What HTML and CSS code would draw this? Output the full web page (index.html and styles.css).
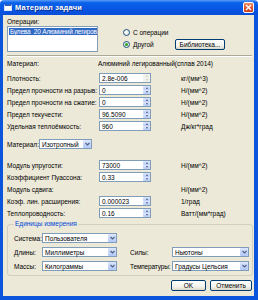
FILE: index.html
```html
<!DOCTYPE html>
<html lang="ru">
  <head>
    <meta charset="UTF-8" />
    <meta name="viewport" content="width=device-width, initial-scale=1.0" />
    <title>Материал задачи</title>
    <link rel="stylesheet" href="styles.css">
  </head>
  <body>
    <div class="window">
      <div class="titlebar">
        <span class="app-icon"></span>
        <span class="title">Материал задачи</span>
        <span class="close">
          <svg width="7" height="7" viewBox="0 0 7 7"><path d="M1 1L6 6M6 1L1 6" stroke="#fff" stroke-width="1.4" /></svg>
        </span>
      </div>
      <div class="frame">
        <div class="caption">Операции:</div>
        <div class="ops">
          <div class="listbox">
            <div class="item selected">Булева_20 Алюминий легиров</div>
          </div>
          <div class="source">
            <label class="radio"><span class="dot"></span>С операции</label>
            <div class="source-row">
              <label class="radio checked"><span class="dot"></span>Другой</label>
              <button class="btn lib">Библиотека...</button>
            </div>
          </div>
        </div>
        <div class="sep"></div>

        <div class="material-row">
          <span class="mat-label">Материал:</span>
          <span>Алюминий легированный(сплав 2014)</span>
        </div>

        <div class="props">
          <span>Плотность:</span>
          <div class="field"><span>2.8e-006</span><span class="spin disabled"><i class="up"></i><i class="down"></i></span></div>
          <span class="unit">кг/(мм^3)</span>

          <span>Предел прочности на разрыв:</span>
          <div class="field"><span>0</span><span class="spin"><i class="up"></i><i class="down"></i></span></div>
          <span class="unit">Н/(мм^2)</span>

          <span>Предел прочности на сжатие:</span>
          <div class="field"><span>0</span><span class="spin"><i class="up"></i><i class="down"></i></span></div>
          <span class="unit">Н/(мм^2)</span>

          <span>Предел текучести:</span>
          <div class="field"><span>96.5090</span><span class="spin"><i class="up"></i><i class="down"></i></span></div>
          <span class="unit">Н/(мм^2)</span>

          <span>Удельная теплоёмкость:</span>
          <div class="field"><span>960</span><span class="spin"><i class="up"></i><i class="down"></i></span></div>
          <span class="unit">Дж/кг*град</span>
        </div>

        <div class="mat-select">
          <span class="mat-type">Материал:</span>
          <div class="combo type"><span>Изотропный</span><span class="drop"><svg width="5" height="4" viewBox="0 0 5 4"><path d="M0.5 1L2.5 3L4.5 1" fill="none" stroke="#4d6185" stroke-width="1.2" /></svg></span></div>
        </div>

        <div class="props second">
          <span>Модуль упругости:</span>
          <div class="field"><span>73000</span><span class="spin"><i class="up"></i><i class="down"></i></span></div>
          <span class="unit">Н/(мм^2)</span>

          <span>Коэффициент Пуассона:</span>
          <div class="field"><span>0.33</span><span class="spin"><i class="up"></i><i class="down"></i></span></div>
          <span class="unit"></span>

          <span>Модуль сдвига:</span>
          <span></span>
          <span class="unit">Н/(мм^2)</span>

          <span>Коэф. лин. расширения:</span>
          <div class="field"><span>0.000023</span><span class="spin"><i class="up"></i><i class="down"></i></span></div>
          <span class="unit">1/град</span>

          <span>Теплопроводность:</span>
          <div class="field"><span>0.16</span><span class="spin"><i class="up"></i><i class="down"></i></span></div>
          <span class="unit">Ватт/(мм*град)</span>
        </div>

        <fieldset class="units">
          <legend>Единицы измерения</legend>
          <div class="units-grid">
            <span>Система:</span>
            <div class="combo"><span>Пользователя</span><span class="drop"><svg width="5" height="4" viewBox="0 0 5 4"><path d="M0.5 1L2.5 3L4.5 1" fill="none" stroke="#4d6185" stroke-width="1.2" /></svg></span></div>
            <span></span><span></span><span></span>

            <span>Длины:</span>
            <div class="combo"><span>Миллиметры</span><span class="drop"><svg width="5" height="4" viewBox="0 0 5 4"><path d="M0.5 1L2.5 3L4.5 1" fill="none" stroke="#4d6185" stroke-width="1.2" /></svg></span></div>
            <span></span>
            <span>Силы:</span>
            <div class="combo"><span>Ньютоны</span><span class="drop"><svg width="5" height="4" viewBox="0 0 5 4"><path d="M0.5 1L2.5 3L4.5 1" fill="none" stroke="#4d6185" stroke-width="1.2" /></svg></span></div>

            <span>Массы:</span>
            <div class="combo"><span>Килограммы</span><span class="drop"><svg width="5" height="4" viewBox="0 0 5 4"><path d="M0.5 1L2.5 3L4.5 1" fill="none" stroke="#4d6185" stroke-width="1.2" /></svg></span></div>
            <span></span>
            <span class="tight">Температуры:</span>
            <div class="combo"><span>Градусы Цельсия</span><span class="drop"><svg width="5" height="4" viewBox="0 0 5 4"><path d="M0.5 1L2.5 3L4.5 1" fill="none" stroke="#4d6185" stroke-width="1.2" /></svg></span></div>
          </div>
        </fieldset>

        <div class="actions">
          <button class="btn ok">OK</button>
          <button class="btn cancel">Отменить</button>
        </div>
      </div>
    </div>
  </body>
</html>
```

FILE: styles.css
```css
body {
  margin: 0;
  background-color: white;
  font-family: "Liberation Sans", Arial, sans-serif;
  font-size: 6.5px;
  color: black;
}

.window {
  width: 258px;
  height: 300px;
  display: flex;
  flex-direction: column;
}

.titlebar {
  height: 15px;
  flex: none;
  display: flex;
  align-items: center;
  padding: 0 4px 0 4px;
  background: linear-gradient(180deg, #5a9cf8 0%, #0b62ea 18%, #0757e5 55%, #0a4ed8 100%);
  border-radius: 4px 4px 0 0;
}

.app-icon {
  width: 8px;
  height: 7px;
  box-sizing: border-box;
  background: white;
  border: 1px solid #d6e2fa;
  border-top: 2px solid #2a5fc8;
}

.title {
  margin-left: 3px;
  color: white;
  font-weight: bold;
  font-size: 7.5px;
  letter-spacing: 0.2px;
  text-shadow: 1px 1px 0 #0a2a8a;
}

.close {
  margin-left: auto;
  width: 11px;
  height: 11px;
  box-sizing: border-box;
  display: flex;
  align-items: center;
  justify-content: center;
  background: linear-gradient(180deg, #f08a62, #e0502a 60%, #c9401e);
  border: 1px solid #fff;
  border-radius: 2px;
}

.frame {
  flex: 1;
  background-color: #ece9d8;
  border: solid #0a55dc;
  border-width: 0 4px 4px 3px;
  padding: 3px 2px 0 4px;
}

.caption {
  height: 8px;
  line-height: 8px;
}

.ops {
  display: flex;
  gap: 25px;
}

.listbox {
  width: 91px;
  height: 26px;
  box-sizing: border-box;
  background: white;
  border: 1px solid #7f9db9;
  padding: 1px 0 0 1px;
}

.item {
  height: 7px;
  line-height: 7px;
  white-space: nowrap;
  letter-spacing: -0.2px;
  padding-left: 1px;
}

.selected {
  background-color: #316ac5;
  color: white;
}

.source {
  padding-top: 2px;
}

.radio {
  display: flex;
  align-items: center;
  gap: 3px;
  height: 8px;
}

.dot {
  width: 7px;
  height: 7px;
  box-sizing: border-box;
  border: 1px solid #1c5180;
  border-radius: 50%;
  background: radial-gradient(circle at 40% 40%, #fff, #dcdbd5);
  display: flex;
  align-items: center;
  justify-content: center;
}

.checked .dot::after {
  content: "";
  width: 3px;
  height: 3px;
  border-radius: 50%;
  background: #21a121;
}

.source-row {
  display: flex;
  align-items: center;
  margin-top: 3px;
}

.source-row .radio {
  width: 52px;
}

.btn {
  font: inherit;
  color: black;
  height: 11px;
  padding: 0;
  box-sizing: border-box;
  border: 1px solid #003c74;
  border-radius: 2px;
  background: linear-gradient(180deg, #ffffff, #f3f2ec 60%, #dcd8cb);
}

.lib {
  width: 50px;
}

.sep {
  margin-top: 3px;
  height: 0;
  border-top: 1px solid #aca899;
  border-bottom: 1px solid #fff;
}

.material-row {
  display: flex;
  align-items: center;
  height: 8px;
  margin-top: 2px;
}

.mat-label {
  width: 91px;
}

.props {
  display: grid;
  grid-template-columns: 92px 52px auto;
  grid-auto-rows: 10px;
  row-gap: 2px;
  align-items: center;
  margin-top: 6px;
}

.props.second {
  margin-top: 11px;
}

.unit {
  padding-left: 30px;
}

.field {
  height: 10px;
  box-sizing: border-box;
  background: white;
  border: 1px solid #7f9db9;
  display: flex;
  align-items: center;
  padding-left: 2px;
}

.spin {
  margin-left: auto;
  width: 7px;
  height: 8px;
  display: flex;
  flex-direction: column;
}

.spin i {
  flex: 1;
  display: flex;
  align-items: center;
  justify-content: center;
  background: linear-gradient(180deg, #dce6fd, #b9cdf8);
  border-radius: 1px;
}

.spin i::after {
  content: "";
  border-left: 1.5px solid transparent;
  border-right: 1.5px solid transparent;
}

.spin .up::after {
  border-bottom: 2px solid #4d6185;
}

.spin .down::after {
  border-top: 2px solid #4d6185;
}

.spin.disabled i {
  background: #f2f1ec;
}

.spin.disabled i::after {
  border-bottom-color: #c9c7ba;
  border-top-color: #c9c7ba;
}

.mat-select {
  display: flex;
  align-items: center;
  margin-top: 8px;
}

.mat-type {
  width: 32px;
}

.combo {
  height: 10px;
  box-sizing: border-box;
  background: white;
  border: 1px solid #7f9db9;
  display: flex;
  align-items: center;
  padding-left: 2px;
}

.combo.type {
  width: 53px;
}

.drop {
  margin-left: auto;
  width: 8px;
  height: 8px;
  display: flex;
  align-items: center;
  justify-content: center;
  background: linear-gradient(180deg, #dce6fd, #b3c8f7);
  border-radius: 1px;
}

.units {
  margin: 2px 0 0 0;
  padding: 5px 3px 4px 6px;
  border: 1px solid #d0d0bf;
  border-radius: 3px;
}

.units legend {
  color: #0046d5;
  padding: 0 1px;
  line-height: 8px;
}

.units-grid {
  display: grid;
  grid-template-columns: 28px 75px 13px 42px 77px;
  grid-auto-rows: 10px;
  row-gap: 4px;
  align-items: center;
}

.tight {
  letter-spacing: -0.15px;
}

.actions {
  display: flex;
  justify-content: flex-end;
  gap: 4px;
  margin-top: 4px;
}

.ok {
  width: 35px;
}

.cancel {
  width: 42px;
}
```
